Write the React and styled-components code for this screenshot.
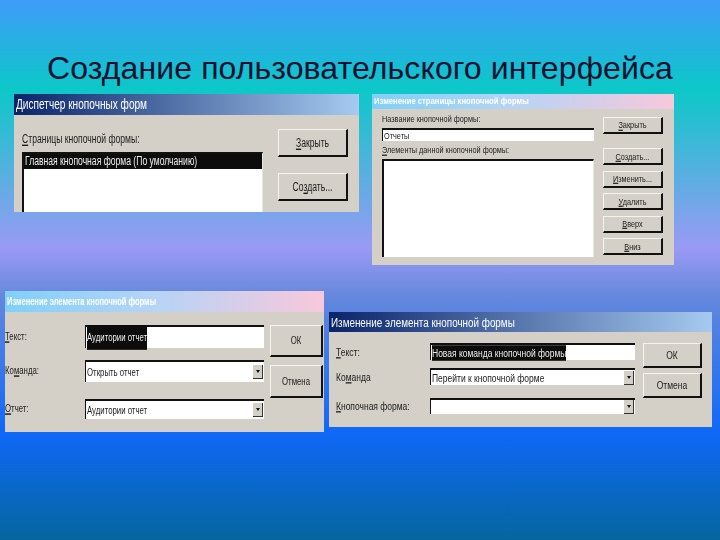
import styled, { createGlobalStyle } from "styled-components";

const GlobalStyle = createGlobalStyle`
  html, body {
    margin: 0;
    padding: 0;
  }
  body {
    width: 720px;
    height: 540px;
    overflow: hidden;
    font-family: "Liberation Sans", Arial, sans-serif;
  }
`;

const Slide = styled.div`
  position: relative;
  width: 720px;
  height: 540px;
  overflow: hidden;
  background: linear-gradient(
    180deg,
    #3f9bfa 0%,
    #0cc8c8 16.5%,
    #9a9af5 46%,
    #6488dc 55%,
    #0f68f8 80%,
    #05669e 100%
  );
`;

const Title = styled.h1`
  margin: 0;
  padding-top: 47px;
  text-align: center;
  font-family: "Liberation Sans", Arial, sans-serif;
  font-size: 32px;
  line-height: 42px;
  font-weight: 400;
  color: #021030;
  letter-spacing: 0.1px;
`;

// the four dialog screenshots lie on the slide like windows on a desktop
const Dialog = styled.div`
  position: absolute;
  left: ${(p) => p.$x}px;
  top: ${(p) => p.$y}px;
  width: ${(p) => p.$w}px;
  height: ${(p) => p.$h}px;
  display: flex;
  flex-direction: column;
  overflow: hidden;
  background: #d4d0c8;
  color: #1c1c1c;
  font-size: ${(p) => p.$font}px;
  --stretch: ${(p) => p.$stretch};
  filter: blur(0.35px);
`;

// the screenshots were squeezed sideways, so the text is narrow and tall
const Txt = styled.span`
  display: inline-block;
  transform: scaleY(var(--stretch));
  white-space: nowrap;
`;

const TitleBar = styled.div`
  flex: none;
  height: ${(p) => p.$h}px;
  display: flex;
  align-items: center;
  padding-left: 2px;
  box-sizing: border-box;
  color: #fff;
  font-size: ${(p) => p.$font}px;
  white-space: nowrap;
  background: ${(p) =>
    p.$light
      ? "linear-gradient(90deg, #7fd0f8 0%, #b4d4f6 45%, #f8c8dc 100%)"
      : "linear-gradient(90deg, #0a246a 0%, #a6caf0 100%)"};
  font-weight: ${(p) => (p.$light ? 700 : 400)};
`;

const Body = styled.div`
  flex: 1;
  min-height: 0;
  display: flex;
  justify-content: space-between;
  padding: ${(p) => p.$pad};
`;

const Fields = styled.div`
  display: flex;
  flex-direction: column;
  width: ${(p) => p.$w}px;
  margin-top: ${(p) => p.$top || 0}px;
`;

const Label = styled.div`
  line-height: 14px;
  margin-bottom: ${(p) => p.$gap || 0}px;
  white-space: nowrap;
`;

const Hot = styled.span`
  text-decoration: underline;
`;

const ListBox = styled.div`
  flex: 1;
  min-height: 0;
  background: #fff;
  border-top: 2px solid #111;
  border-left: 2px solid #111;
  border-right: 1px solid #e8e6e0;
  box-sizing: border-box;
`;

const SelectedRow = styled.div`
  background: #0c0c0c;
  color: #eee;
  height: 15px;
  line-height: 15px;
  padding-left: 1px;
  white-space: nowrap;
`;

const TextInput = styled.div`
  height: ${(p) => p.$h}px;
  margin-bottom: ${(p) => p.$gap || 0}px;
  background: #fff;
  border-top: 2px solid #111;
  border-left: 1px solid #111;
  box-sizing: border-box;
  padding-left: 1px;
  display: flex;
  align-items: center;
  white-space: nowrap;
`;

const Marked = styled.span`
  background: #0c0c0c;
  color: #eee;
  padding: ${(p) => p.$pad || "1px 0"};
`;

const FormRow = styled.div`
  display: grid;
  grid-template-columns: ${(p) => p.$label}px ${(p) => p.$field}px;
  align-items: center;
  margin-bottom: ${(p) => p.$gap || 0}px;
`;

const Combo = styled.div`
  height: ${(p) => p.$h}px;
  background: #fff;
  border-top: 2px solid #111;
  border-left: 1px solid #111;
  box-sizing: border-box;
  padding: 0 1px;
  display: flex;
  align-items: center;
  justify-content: space-between;
  white-space: nowrap;
`;

const ComboArrow = styled.span`
  flex: none;
  width: 10px;
  height: 14px;
  margin-right: 0;
  display: flex;
  align-items: center;
  justify-content: center;
  background: #d4d0c8;
  border-right: 1px solid #333;
  border-bottom: 1px solid #333;
  box-sizing: border-box;
  &::after {
    content: "";
    border-left: 2px solid transparent;
    border-right: 2px solid transparent;
    border-top: 3px solid #111;
  }
`;

const Buttons = styled.div`
  display: flex;
  flex-direction: column;
  gap: ${(p) => p.$gap}px;
  margin-top: ${(p) => p.$top || 0}px;
`;

const Button = styled.div`
  width: ${(p) => p.$w}px;
  height: ${(p) => p.$h}px;
  flex: none;
  margin-bottom: ${(p) => p.$after || 0}px;
  box-sizing: border-box;
  display: flex;
  align-items: center;
  justify-content: center;
  background: #d4d0c8;
  border-top: 1px solid #f4f3ef;
  border-left: 1px solid #f4f3ef;
  border-right: 2px solid #111;
  border-bottom: 2px solid #111;
  white-space: nowrap;
`;

function Manager() {
  return (
    <Dialog $x={14} $y={94} $w={345} $h={118} $font={8.6} $stretch={1.4}>
      <TitleBar $h={21} $font={10.1}><Txt>Диспетчер кнопочных форм</Txt></TitleBar>
      <Body $pad="14px 11px 0 8px">
        <Fields $w={241} $top={3}>
          <Label $gap={6}><Txt><Hot>С</Hot>траницы кнопочной формы:</Txt></Label>
          <ListBox>
            <SelectedRow><Txt>Главная кнопочная форма (По умолчанию)</Txt></SelectedRow>
          </ListBox>
        </Fields>
        <Buttons $gap={16}>
          <Button $w={70} $h={28}><Txt><Hot>З</Hot>акрыть</Txt></Button>
          <Button $w={70} $h={28}><Txt>Со<Hot>з</Hot>дать...</Txt></Button>
        </Buttons>
      </Body>
    </Dialog>
  );
}

function PageEditor() {
  return (
    <Dialog $x={372} $y={94} $w={302} $h={171} $font={7.3} $stretch={1.2}>
      <TitleBar $h={15} $font={7.7} $light><Txt>Изменение страницы кнопочной формы</Txt></TitleBar>
      <Body $pad="4px 11px 8px 10px">
        <Fields $w={212}>
          <Label $gap={1}><Txt>Название кнопочной формы:</Txt></Label>
          <TextInput $h={13} $gap={3}><Txt>Отчеты</Txt></TextInput>
          <Label $gap={1}><Txt><Hot>Э</Hot>лементы данной кнопочной формы:</Txt></Label>
          <ListBox />
        </Fields>
        <Buttons $gap={5.5} $top={4}>
          <Button $w={60} $h={17} $after={8.5}><Txt><Hot>З</Hot>акрыть</Txt></Button>
          <Button $w={60} $h={17}><Txt><Hot>С</Hot>оздать...</Txt></Button>
          <Button $w={60} $h={17}><Txt><Hot>И</Hot>зменить...</Txt></Button>
          <Button $w={60} $h={17}><Txt><Hot>У</Hot>далить</Txt></Button>
          <Button $w={60} $h={17}><Txt><Hot>В</Hot>верх</Txt></Button>
          <Button $w={60} $h={17}><Txt><Hot>В</Hot>низ</Txt></Button>
        </Buttons>
      </Body>
    </Dialog>
  );
}

function ReportItem() {
  return (
    <Dialog $x={5} $y={291} $w={319} $h={141} $font={7.8} $stretch={1.45}>
      <TitleBar $h={21} $font={7.5} $light><Txt>Изменение элемента кнопочной формы</Txt></TitleBar>
      <Body $pad="13px 1px 0 0">
        <Fields $w={264}>
          <FormRow $label={80} $field={179} $gap={12}>
            <Label><Txt><Hot>Т</Hot>екст:</Txt></Label>
            <TextInput $h={23}><Txt><Marked $pad="4px 0">Аудитории отчет</Marked></Txt></TextInput>
          </FormRow>
          <FormRow $label={80} $field={179} $gap={17}>
            <Label><Txt>Ко<Hot>м</Hot>анда:</Txt></Label>
            <Combo $h={22}><Txt>Открыть отчет</Txt><ComboArrow /></Combo>
          </FormRow>
          <FormRow $label={80} $field={179}>
            <Label><Txt><Hot>О</Hot>тчет:</Txt></Label>
            <Combo $h={20}><Txt>Аудитории отчет</Txt><ComboArrow /></Combo>
          </FormRow>
        </Fields>
        <Buttons $gap={8}>
          <Button $w={53} $h={32}><Txt>ОК</Txt></Button>
          <Button $w={53} $h={33}><Txt>Отмена</Txt></Button>
        </Buttons>
      </Body>
    </Dialog>
  );
}

function ButtonItem() {
  return (
    <Dialog $x={329} $y={312} $w={383} $h={115} $font={8.5} $stretch={1.3}>
      <TitleBar $h={20} $font={9.9}><Txt>Изменение элемента кнопочной формы</Txt></TitleBar>
      <Body $pad="11px 10px 0 7px">
        <Fields $w={299}>
          <FormRow $label={94} $field={205} $gap={8}>
            <Label><Txt><Hot>Т</Hot>екст:</Txt></Label>
            <TextInput $h={17}><Txt><Marked>Новая команда кнопочной формы</Marked></Txt></TextInput>
          </FormRow>
          <FormRow $label={94} $field={205} $gap={13}>
            <Label><Txt>Ко<Hot>м</Hot>анда</Txt></Label>
            <Combo $h={17}><Txt>Перейти к кнопочной форме</Txt><ComboArrow /></Combo>
          </FormRow>
          <FormRow $label={94} $field={205}>
            <Label><Txt><Hot>К</Hot>нопочная форма:</Txt></Label>
            <Combo $h={16}><span /><ComboArrow /></Combo>
          </FormRow>
        </Fields>
        <Buttons $gap={5}>
          <Button $w={59} $h={25}><Txt>ОК</Txt></Button>
          <Button $w={59} $h={25}><Txt>Отмена</Txt></Button>
        </Buttons>
      </Body>
    </Dialog>
  );
}

export default function App() {
  return (
    <>
      <GlobalStyle />
      <Slide>
        <Title>Создание пользовательского интерфейса</Title>
        <Manager />
        <PageEditor />
        <ReportItem />
        <ButtonItem />
      </Slide>
    </>
  );
}
